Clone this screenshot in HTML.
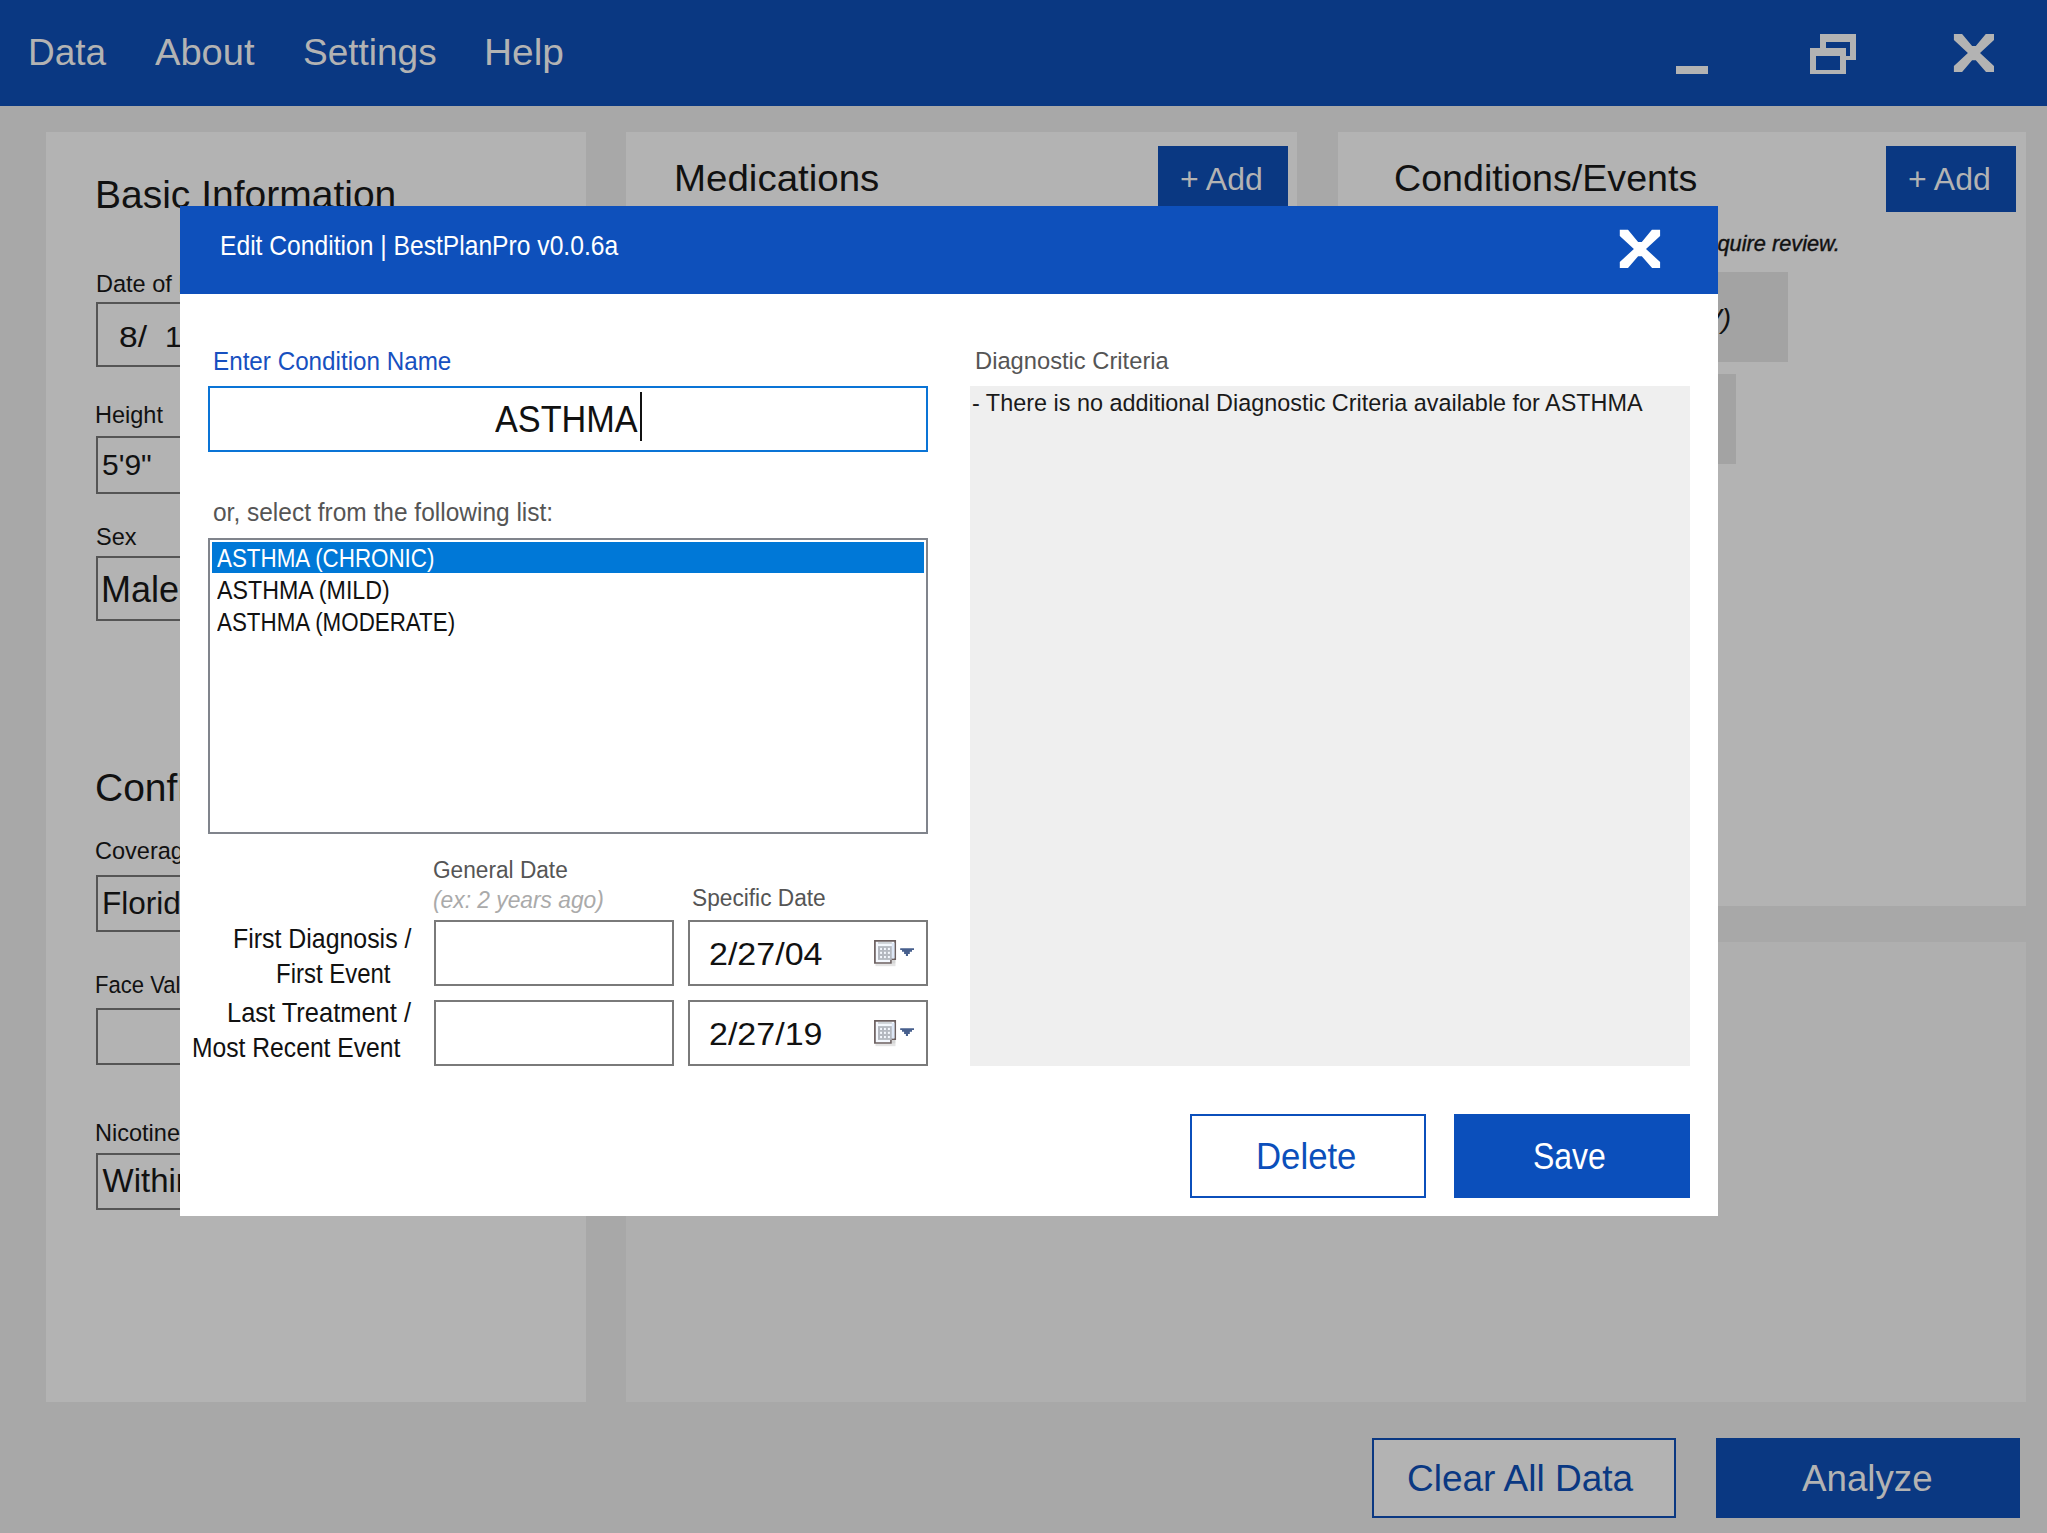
<!DOCTYPE html>
<html><head><meta charset="utf-8">
<style>
html,body{margin:0;padding:0;}
body{width:2047px;height:1533px;position:relative;overflow:hidden;background:#a8a8a8;font-family:"Liberation Sans",sans-serif;}
.a{position:absolute;}
.t{position:absolute;line-height:1;white-space:nowrap;transform-origin:0 0;}
.bx{position:absolute;box-sizing:border-box;}
</style></head><body>

<!-- top bar -->
<div class="bx" style="left:0;top:0;width:2047px;height:106px;background:#0a3882;"></div>
<div class="t" style="left:28px;top:34px;font-size:37px;color:#b3b3b3;">Data</div>
<div class="t" style="left:155px;top:34px;font-size:37px;color:#b3b3b3;transform:scaleX(1.03);">About</div>
<div class="t" style="left:303px;top:34px;font-size:37px;color:#b3b3b3;">Settings</div>
<div class="t" style="left:484px;top:34px;font-size:37px;color:#b3b3b3;transform:scaleX(1.05);">Help</div>
<svg class="a" style="left:0;top:0" width="2047" height="105">
  <rect x="1676" y="66" width="32" height="8" fill="#b3b3b3"/>
  <path fill-rule="evenodd" d="M1820 34 H1856 V60 H1820 Z M1826 42 V56 H1850 V42 Z" fill="#b3b3b3"/>
  <rect x="1810" y="48" width="36" height="26" fill="#0a3882"/>
  <path fill-rule="evenodd" d="M1810 48 H1846 V74 H1810 Z M1816 56 V70 H1840 V56 Z" fill="#b3b3b3"/>
  <path d="M1953.9 33.9 L1962.1 33.9 L1972.1 46.0 L1975.8 46.0 L1985.8 33.9 L1994.0 33.9 L1994.0 40.0 L1980.0 53.0 L1994.0 65.9 L1994.0 72.0 L1986.0 72.0 L1975.8 60.3 L1972.1 60.3 L1962.1 72.0 L1953.9 72.0 L1953.9 65.9 L1967.9 53.0 L1953.9 40.0 Z" fill="#b3b3b3"/>
</svg>

<!-- panels -->
<div class="bx" style="left:46px;top:132px;width:540px;height:1270px;background:#b3b3b3;"></div>
<div class="bx" style="left:626px;top:132px;width:671px;height:774px;background:#b3b3b3;"></div>
<div class="bx" style="left:1338px;top:132px;width:688px;height:774px;background:#b3b3b3;"></div>
<div class="bx" style="left:626px;top:942px;width:1400px;height:460px;background:#afafaf;"></div>

<!-- left panel content -->
<div class="t" style="left:95px;top:175px;font-size:39px;color:#111;">Basic Information</div>
<div class="t" style="left:96px;top:272px;font-size:24.5px;color:#111;transform:scaleX(0.96);">Date of Birth</div>
<div class="bx" style="left:96px;top:302px;width:300px;height:65px;border:2px solid #555;"></div>
<div class="t" style="left:119px;top:322px;font-size:30px;color:#111;transform:scaleX(1.12);">8/</div><div class="t" style="left:165px;top:322px;font-size:30px;color:#111;">11</div>
<div class="t" style="left:95px;top:403px;font-size:24.5px;color:#111;transform:scaleX(0.96);">Height</div>
<div class="bx" style="left:96px;top:436px;width:300px;height:58px;border:2px solid #555;"></div>
<div class="t" style="left:102px;top:450px;font-size:30px;color:#111;">5'9"</div>
<div class="t" style="left:96px;top:525px;font-size:24.5px;color:#111;transform:scaleX(0.96);">Sex</div>
<div class="bx" style="left:96px;top:556px;width:300px;height:65px;border:2px solid #555;"></div>
<div class="t" style="left:101px;top:572px;font-size:36px;color:#111;">Male</div>

<div class="t" style="left:95px;top:768px;font-size:39px;color:#111;">Configuration</div>
<div class="t" style="left:95px;top:839px;font-size:24.5px;color:#111;transform:scaleX(0.96);">Coverage</div>
<div class="bx" style="left:96px;top:875px;width:300px;height:57px;border:2px solid #555;"></div>
<div class="t" style="left:102px;top:888px;font-size:31.5px;color:#111;">Florida</div>
<div class="t" style="left:95px;top:973px;font-size:24.5px;color:#111;transform:scaleX(0.9);">Face Value</div>
<div class="bx" style="left:96px;top:1008px;width:300px;height:57px;border:2px solid #555;"></div>
<div class="t" style="left:95px;top:1121px;font-size:24.5px;color:#111;transform:scaleX(0.96);">Nicotine</div>
<div class="bx" style="left:96px;top:1153px;width:300px;height:57px;border:2px solid #555;"></div>
<div class="t" style="left:102.5px;top:1164px;font-size:33px;color:#111;">Within</div>

<!-- medications -->
<div class="t" style="left:674px;top:160px;font-size:37px;color:#111;transform:scaleX(1.04);">Medications</div>
<div class="bx" style="left:1158px;top:146px;width:130px;height:66px;background:#0a3882;"></div>
<div class="t" style="left:1180px;top:163px;font-size:32px;color:#b3b3b3;">+ Add</div>

<!-- conditions -->
<div class="t" style="left:1394px;top:160px;font-size:37px;color:#111;transform:scaleX(1.017);">Conditions/Events</div>
<div class="bx" style="left:1886px;top:146px;width:130px;height:66px;background:#0a3882;"></div>
<div class="t" style="left:1908px;top:163px;font-size:32px;color:#b3b3b3;">+ Add</div>
<div class="t" style="left:1692px;top:233px;font-size:22px;color:#111;font-style:italic;transform:scaleX(0.99);-webkit-text-stroke:0.4px #111;">re quire review.</div>
<div class="bx" style="left:1500px;top:272px;width:288px;height:90px;background:#a3a3a3;"></div>
<div class="t" style="left:1703px;top:305px;font-size:28px;color:#111;font-style:italic;">V)</div>
<div class="bx" style="left:1500px;top:374px;width:236px;height:90px;background:#a3a3a3;"></div>

<!-- bottom buttons -->
<div class="bx" style="left:1372px;top:1438px;width:304px;height:80px;border:2px solid #0a3882;background:#b3b3b3;"></div>
<div class="t" style="left:1407px;top:1461px;font-size:36px;color:#0a3882;transform:scaleX(1.027);">Clear All Data</div>
<div class="bx" style="left:1716px;top:1438px;width:304px;height:80px;background:#0a3882;"></div>
<div class="t" style="left:1802px;top:1461px;font-size:36px;color:#b3b3b3;transform:scaleX(1.02);">Analyze</div>

<!-- dialog -->
<div class="bx" style="left:180px;top:206px;width:1538px;height:1010px;background:#fff;"></div>
<div class="bx" style="left:180px;top:206px;width:1538px;height:88px;background:#0e50bb;"></div>
<div class="t" style="left:220px;top:232px;font-size:28px;color:#fff;transform:scaleX(0.88);">Edit Condition | BestPlanPro v0.0.6a</div>
<svg class="a" style="left:0;top:0" width="1720" height="300">
  <path d="M1619.8 229.8 L1628.0 229.8 L1638.1 241.9 L1641.8 241.9 L1651.9 229.8 L1660.1 229.8 L1660.1 235.9 L1646.0 249.0 L1660.1 261.9 L1660.1 268.0 L1652.1 268.0 L1641.8 256.3 L1638.1 256.3 L1628.0 268.0 L1619.8 268.0 L1619.8 261.9 L1633.9 249.0 L1619.8 235.9 Z" fill="#fff"/>
</svg>

<!-- left column of dialog -->
<div class="t" style="left:213px;top:349px;font-size:25.5px;color:#1750c0;transform:scaleX(0.95);">Enter Condition Name</div>
<div class="bx" style="left:208px;top:386px;width:720px;height:66px;border:2px solid #0a74d6;"></div>
<div class="t" style="left:494.5px;top:402px;font-size:36px;color:#111;transform:scaleX(0.951);">ASTHMA</div>
<div class="bx" style="left:640px;top:392px;width:2px;height:49px;background:#111;"></div>

<div class="t" style="left:213px;top:500px;font-size:25.5px;color:#555;transform:scaleX(0.96);">or, select from the following list:</div>
<div class="bx" style="left:208px;top:538px;width:720px;height:296px;border:2px solid #80848c;"></div>
<div class="bx" style="left:212px;top:542px;width:712px;height:31px;background:#0078d7;"></div>
<div class="t" style="left:217px;top:546px;font-size:25.5px;color:#fff;transform:scaleX(0.877);">ASTHMA (CHRONIC)</div>
<div class="t" style="left:217px;top:578px;font-size:25.5px;color:#111;transform:scaleX(0.91);">ASTHMA (MILD)</div>
<div class="t" style="left:217px;top:610px;font-size:25.5px;color:#111;transform:scaleX(0.877);">ASTHMA (MODERATE)</div>

<div class="t" style="left:433px;top:859px;font-size:23px;color:#555;transform:scaleX(0.985);">General Date</div>
<div class="t" style="left:433px;top:889px;font-size:23px;color:#aaa;font-style:italic;transform:scaleX(0.99);">(ex: 2 years ago)</div>
<div class="t" style="left:692px;top:887px;font-size:23.5px;color:#555;transform:scaleX(0.966);">Specific Date</div>

<div class="t" style="left:233px;top:925px;font-size:27.5px;color:#111;transform:scaleX(0.905);">First Diagnosis /</div>
<div class="t" style="left:276px;top:960px;font-size:27.5px;color:#111;transform:scaleX(0.871);">First Event</div>
<div class="t" style="left:227px;top:999px;font-size:27.5px;color:#111;transform:scaleX(0.926);">Last Treatment /</div>
<div class="t" style="left:192px;top:1034px;font-size:27.5px;color:#111;transform:scaleX(0.897);">Most Recent Event</div>

<div class="bx" style="left:434px;top:920px;width:240px;height:66px;border:2px solid #7a7a7a;"></div>
<div class="bx" style="left:688px;top:920px;width:240px;height:66px;border:2px solid #7a7a7a;"></div>
<div class="bx" style="left:434px;top:1000px;width:240px;height:66px;border:2px solid #7a7a7a;"></div>
<div class="bx" style="left:688px;top:1000px;width:240px;height:66px;border:2px solid #7a7a7a;"></div>
<div class="t" style="left:709px;top:939px;font-size:31.5px;color:#111;transform:scaleX(1.08);">2/27/04</div>
<div class="t" style="left:709px;top:1019px;font-size:31.5px;color:#111;transform:scaleX(1.08);">2/27/19</div>
<svg class="a" style="left:870px;top:936px" width="50" height="34">
  <rect x="5.5" y="28" width="20" height="2.2" fill="#e4e4e4"/>
  <path d="M4.9 4.9 H25.2 V23.1 H21 V27 H4.9 Z" fill="#f4f8fe" stroke="#6b5f5f" stroke-width="1.7"/>
  <rect x="21.8" y="7" width="2.6" height="15.5" fill="#dde7f6"/>
  <rect x="8" y="6.2" width="13.8" height="1.5" fill="#c4c8cc"/>
  <rect x="8" y="10.1" width="13.8" height="13.8" fill="#b4b8c0"/>
  <rect x="21.9" y="24" width="3.6" height="3.8" fill="#d6d6d6"/>
  <g fill="#f4f8fe"><rect x="10.1" y="11.9" width="1.9" height="2.1"/><rect x="14" y="11.9" width="1.9" height="2.1"/><rect x="17.9" y="11.9" width="2" height="2.1"/><rect x="10.1" y="15.8" width="1.9" height="2.1"/><rect x="14" y="15.8" width="1.9" height="2.1"/><rect x="17.9" y="15.8" width="2" height="2.1"/><rect x="10.1" y="20" width="1.9" height="2.1"/><rect x="14" y="20" width="1.9" height="2.1"/><rect x="17.9" y="20" width="2" height="2.1"/></g>
  <path d="M30.2 12.2 H44 V14 H42 V15.8 H39.8 V17.9 H38 V20 H35.9 V17.9 H34.1 V15.8 H32 V14 H30.2 Z" fill="#475f8d"/>
</svg>
<svg class="a" style="left:870px;top:1016px" width="50" height="34">
  <rect x="5.5" y="28" width="20" height="2.2" fill="#e4e4e4"/>
  <path d="M4.9 4.9 H25.2 V23.1 H21 V27 H4.9 Z" fill="#f4f8fe" stroke="#6b5f5f" stroke-width="1.7"/>
  <rect x="21.8" y="7" width="2.6" height="15.5" fill="#dde7f6"/>
  <rect x="8" y="6.2" width="13.8" height="1.5" fill="#c4c8cc"/>
  <rect x="8" y="10.1" width="13.8" height="13.8" fill="#b4b8c0"/>
  <rect x="21.9" y="24" width="3.6" height="3.8" fill="#d6d6d6"/>
  <g fill="#f4f8fe"><rect x="10.1" y="11.9" width="1.9" height="2.1"/><rect x="14" y="11.9" width="1.9" height="2.1"/><rect x="17.9" y="11.9" width="2" height="2.1"/><rect x="10.1" y="15.8" width="1.9" height="2.1"/><rect x="14" y="15.8" width="1.9" height="2.1"/><rect x="17.9" y="15.8" width="2" height="2.1"/><rect x="10.1" y="20" width="1.9" height="2.1"/><rect x="14" y="20" width="1.9" height="2.1"/><rect x="17.9" y="20" width="2" height="2.1"/></g>
  <path d="M30.2 12.2 H44 V14 H42 V15.8 H39.8 V17.9 H38 V20 H35.9 V17.9 H34.1 V15.8 H32 V14 H30.2 Z" fill="#475f8d"/>
</svg>

<!-- right column -->
<div class="t" style="left:975px;top:349px;font-size:24.5px;color:#555;transform:scaleX(0.968);">Diagnostic Criteria</div>
<div class="bx" style="left:970px;top:386px;width:720px;height:680px;background:#efefef;"></div>
<div class="t" style="left:972px;top:391px;font-size:24.5px;color:#1a1a1a;transform:scaleX(0.955);">- There is no additional Diagnostic Criteria available for ASTHMA</div>

<!-- buttons -->
<div class="bx" style="left:1190px;top:1114px;width:236px;height:84px;border:2px solid #0b4fbb;"></div>
<div class="t" style="left:1256px;top:1139px;font-size:36.5px;color:#0b4fbb;transform:scaleX(0.952);">Delete</div>
<div class="bx" style="left:1454px;top:1114px;width:236px;height:84px;background:#0b4fbb;"></div>
<div class="t" style="left:1533px;top:1139px;font-size:36.5px;color:#fff;transform:scaleX(0.876);">Save</div>

</body></html>
